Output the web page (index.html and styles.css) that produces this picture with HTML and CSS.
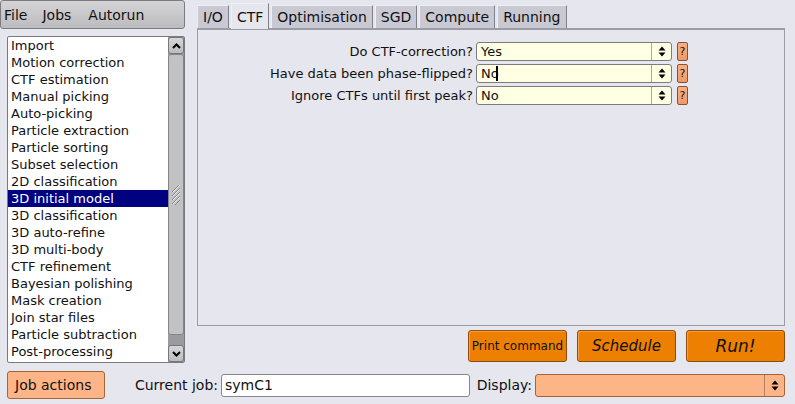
FILE: index.html
```html
<!DOCTYPE html>
<html lang="en">
<head>
  <meta charset="UTF-8">
  <title>RELION</title>
  <link rel="stylesheet" href="styles.css">
</head>
<body>
  <div class="window">
    <div class="main">
      <!-- Left side: menu and job type list -->
      <aside class="sidebar">
        <div class="menubar">
          <span>File</span>
          <span>Jobs</span>
          <span>Autorun</span>
        </div>
        <div class="joblist">
          <ul class="jobs">
            <li>Import</li>
            <li>Motion correction</li>
            <li>CTF estimation</li>
            <li>Manual picking</li>
            <li>Auto-picking</li>
            <li>Particle extraction</li>
            <li>Particle sorting</li>
            <li>Subset selection</li>
            <li>2D classification</li>
            <li class="selected">3D initial model</li>
            <li>3D classification</li>
            <li>3D auto-refine</li>
            <li>3D multi-body</li>
            <li>CTF refinement</li>
            <li>Bayesian polishing</li>
            <li>Mask creation</li>
            <li>Join star files</li>
            <li>Particle subtraction</li>
            <li>Post-processing</li>
          </ul>
          <div class="scrollbar">
            <div class="scroll-btn">
              <svg width="9" height="6" viewBox="0 0 9 6"><path d="M1 5 L4.5 1.5 L8 5" fill="none" stroke="#000" stroke-width="2"/></svg>
            </div>
            <div class="scroll-track">
              <div class="scroll-thumb">
                <svg width="10" height="20" viewBox="0 0 10 20">
                  <path d="M1 7 L8 0 M1 11 L9 3 M1 15 L9 7 M1 19 L9 11 M3 21 L9 15" stroke="#888" stroke-width="1"/>
                  <path d="M2 7 L9 0 M2 11 L9 4 M2 15 L9 8 M2 19 L9 12" stroke="#e8e8e8" stroke-width="1"/>
                </svg>
              </div>
            </div>
            <div class="scroll-btn">
              <svg width="9" height="6" viewBox="0 0 9 6"><path d="M1 1 L4.5 4.5 L8 1" fill="none" stroke="#000" stroke-width="2"/></svg>
            </div>
          </div>
        </div>
      </aside>

      <!-- Right side: parameter tabs and run buttons -->
      <section class="workspace">
        <div class="tabs">
          <div class="tab">I/O</div>
          <div class="tab active">CTF</div>
          <div class="tab">Optimisation</div>
          <div class="tab">SGD</div>
          <div class="tab">Compute</div>
          <div class="tab">Running</div>
        </div>
        <div class="panel">
          <div class="form">
            <div class="row">
              <label>Do CTF-correction?</label>
              <div class="choice">
                <span class="value">Yes</span>
                <span class="arrows"><svg width="8" height="11" viewBox="0 0 8 11"><path d="M0.5 4.5 L4 0.5 L7.5 4.5 Z M0.5 6.5 L4 10.5 L7.5 6.5 Z" fill="#000"/></svg></span>
              </div>
              <div class="help">?</div>
            </div>
            <div class="row">
              <label>Have data been phase-flipped?</label>
              <div class="choice">
                <span class="value">No<i class="cursor"></i></span>
                <span class="arrows"><svg width="8" height="11" viewBox="0 0 8 11"><path d="M0.5 4.5 L4 0.5 L7.5 4.5 Z M0.5 6.5 L4 10.5 L7.5 6.5 Z" fill="#000"/></svg></span>
              </div>
              <div class="help">?</div>
            </div>
            <div class="row">
              <label>Ignore CTFs until first peak?</label>
              <div class="choice">
                <span class="value">No</span>
                <span class="arrows"><svg width="8" height="11" viewBox="0 0 8 11"><path d="M0.5 4.5 L4 0.5 L7.5 4.5 Z M0.5 6.5 L4 10.5 L7.5 6.5 Z" fill="#000"/></svg></span>
              </div>
              <div class="help">?</div>
            </div>
          </div>
        </div>
        <div class="actions">
          <div class="run-btn small">Print command</div>
          <div class="run-btn italic">Schedule</div>
          <div class="run-btn italic large">Run!</div>
        </div>
      </section>
    </div>

    <!-- Bottom bar -->
    <div class="bottombar">
      <div class="job-actions">Job actions</div>
      <label class="field-label current">Current job:</label>
      <div class="text-input">symC1</div>
      <label class="field-label display">Display:</label>
      <div class="display-choice">
        <span class="arrows"><svg width="8" height="11" viewBox="0 0 8 11"><path d="M0.5 4.5 L4 0.5 L7.5 4.5 Z M0.5 6.5 L4 10.5 L7.5 6.5 Z" fill="#000"/></svg></span>
      </div>
    </div>
  </div>
</body>
</html>
```

FILE: styles.css
```css
:root {
  --bg: #e6e6ee;
  --tab-bg: #c9c9d3;
  --frame: #9c9ca6;
  --input-bg: #ffffe3;
  --orange: #ed8000;
  --orange-border: #8c4b12;
  --peach: #fdb487;
  --peach-border: #a4643c;
  --navy: #000080;
}

* {
  margin: 0;
  padding: 0;
  box-sizing: border-box;
}

body {
  width: 795px;
  height: 404px;
  overflow: hidden;
  background: var(--bg);
  font-family: 'DejaVu Sans', sans-serif;
  font-size: 13px;
  color: #111;
}

.window {
  display: flex;
  flex-direction: column;
  height: 404px;
}

.main {
  display: flex;
  height: 371px;
}

/* Sidebar */
.sidebar {
  width: 185px;
  display: flex;
  flex-direction: column;
}

.menubar {
  height: 29px;
  display: flex;
  align-items: center;
  padding-left: 3px;
  font-size: 14px;
  background: linear-gradient(#d4d4d6, #bcbcbe);
  border: 1px solid #7c7c80;
  border-radius: 3px;
}

.menubar span {
  margin-right: 15px;
}

.menubar span:nth-child(2) {
  margin-right: 17px;
}

.joblist {
  margin: 7px 0 0 7px;
  height: 327px;
  display: flex;
  background: #fff;
  border: 1px solid #7a7a7e;
  border-radius: 2px;
}

.jobs {
  list-style: none;
  flex: 1;
}

.jobs li {
  height: 17px;
  line-height: 17px;
  padding-left: 3px;
  white-space: nowrap;
}

.jobs li.selected {
  background: var(--navy);
  color: #fff;
}

.scrollbar {
  width: 16px;
  display: flex;
  flex-direction: column;
  background: #9b9b9f;
}

.scroll-btn {
  height: 17px;
  display: flex;
  align-items: center;
  justify-content: center;
  background: linear-gradient(#d6d6d8, #bdbdc0);
  border: 1px solid #77777b;
  border-radius: 3px;
}

.scroll-track {
  flex: 1;
  padding-bottom: 10px;
  display: flex;
}

.scroll-thumb {
  flex: 1;
  display: flex;
  align-items: center;
  justify-content: center;
  background: #c2c2c5;
  border: 1px solid #848488;
  border-radius: 3px;
}

/* Workspace */
.workspace {
  width: 588px;
  margin-left: 12px;
  padding-top: 4px;
  display: flex;
  flex-direction: column;
}

.tabs {
  height: 24px;
  display: flex;
  align-items: flex-end;
  gap: 2px;
  font-size: 14px;
}

.tab {
  height: 23px;
  padding: 0 5px;
  display: flex;
  align-items: center;
  background: var(--tab-bg);
  border-top: 1px solid #eeeef4;
  border-left: 1px solid #eeeef4;
  border-right: 1px solid #808088;
}

.tab.active {
  height: 26px;
  margin-bottom: -1px;
  background: var(--bg);
  position: relative;
  z-index: 1;
}

.panel {
  height: 298px;
  border: 1px solid var(--frame);
  border-top: 2px solid var(--frame);
  padding: 12px 96px 0 0;
}

.form {
  display: flex;
  flex-direction: column;
  gap: 3px;
}

.row {
  display: flex;
  align-items: center;
  height: 19px;
}

.row label {
  flex: 1;
  text-align: right;
  padding-right: 3px;
  white-space: nowrap;
}

.choice {
  width: 196px;
  height: 19px;
  display: flex;
  align-items: center;
  background: var(--input-bg);
  border: 1px solid #7c7c80;
  border-radius: 3px;
}

.choice .value {
  flex: 1;
  padding-left: 4px;
  display: flex;
  align-items: center;
}

.cursor {
  display: inline-block;
  width: 2px;
  height: 15px;
  margin-left: -3px;
  background: #000;
}

.arrows {
  width: 20px;
  height: 100%;
  display: flex;
  align-items: center;
  justify-content: center;
  border-left: 1px solid #a8a8a8;
}

.help {
  width: 11px;
  height: 19px;
  margin-left: 5px;
  display: flex;
  align-items: center;
  justify-content: center;
  font-size: 11px;
  background: linear-gradient(#f8b083, #ef9a66);
  border: 1px solid #8c5030;
  border-radius: 2px;
}

.actions {
  margin-top: 4px;
  display: flex;
  justify-content: flex-end;
  gap: 10px;
}

.run-btn {
  width: 99px;
  height: 32px;
  display: flex;
  align-items: center;
  justify-content: center;
  background: var(--orange);
  border: 1px solid var(--orange-border);
  border-radius: 3px;
  box-shadow: inset 1px 1px 0 #f6a040;
}

.run-btn.small {
  font-size: 12px;
}

.run-btn.italic {
  font-style: italic;
  font-size: 15px;
}

.run-btn.large {
  font-size: 17px;
}

/* Bottom bar */
.bottombar {
  height: 28px;
  display: flex;
  align-items: center;
  padding-left: 7px;
  font-size: 14px;
}

.job-actions {
  width: 98px;
  height: 28px;
  padding-left: 7px;
  display: flex;
  align-items: center;
  background: var(--peach);
  border: 1px solid var(--peach-border);
  border-radius: 3px;
}

.field-label {
  text-align: right;
  white-space: nowrap;
}

.field-label.current {
  width: 88px;
  margin-left: 25px;
}

.field-label.display {
  width: 62px;
}

.text-input {
  width: 249px;
  height: 23px;
  margin-left: 3px;
  padding-left: 3px;
  display: flex;
  align-items: center;
  background: #fff;
  border: 1px solid #88888c;
  border-radius: 3px;
}

.display-choice {
  width: 250px;
  height: 23px;
  margin-left: 3px;
  display: flex;
  justify-content: flex-end;
  background: var(--peach);
  border: 1px solid var(--peach-border);
  border-radius: 3px;
}

.display-choice .arrows {
  border-left-color: #b0825f;
}
```
